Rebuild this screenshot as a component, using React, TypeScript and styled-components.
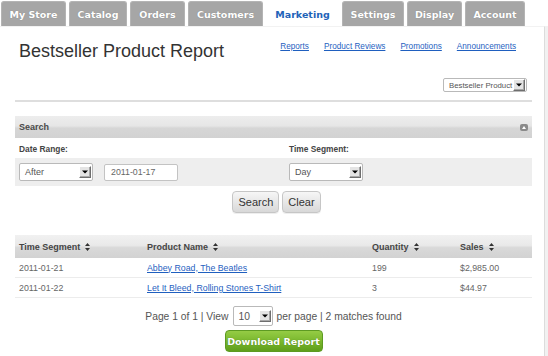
import React from "react";
import styled, { createGlobalStyle } from "styled-components";

const Global = createGlobalStyle`
  html, body { margin: 0; padding: 0; background: #ffffff; }
  body { font-family: "Liberation Sans", Arial, sans-serif; }
  * { box-sizing: border-box; }
`;

const Frame = styled.div`
  width: 548px;
  height: 356px;
  overflow: hidden;
  display: flex;
  flex-direction: column;
`;

const TabBar = styled.div`
  display: flex;
  align-items: flex-end;
  gap: 3px;
  height: 26px;
  padding-left: 1px;
`;

const Tab = styled.div<{ $active?: boolean; $w: number }>`
  width: ${(p) => p.$w}px;
  height: 25px;
  display: flex;
  align-items: center;
  justify-content: center;
  border-radius: 3px 3px 0 0;
  font-family: "DejaVu Sans", Verdana, sans-serif;
  font-weight: bold;
  font-size: 9.5px;
  background: ${(p) => (p.$active ? "#ffffff" : "#a6a6a6")};
  color: ${(p) => (p.$active ? "#1f63b8" : "#ffffff")};
  border: 1px solid ${(p) => (p.$active ? "#ffffff" : "#b4b4b4")};
  border-bottom: none;
  text-shadow: ${(p) => (p.$active ? "none" : "0 0 1px rgba(0,0,0,0.25)")};
`;

const Body = styled.div`
  flex: 1;
  display: flex;
  background: #f1f1f1;
`;

const Main = styled.div`
  width: 545px;
  background: #ffffff;
  border-right: 1px solid #dcdcdc;
  border-top: 1px solid #f2f2f2;
  padding: 0 12px 0 15px;
  display: flex;
  flex-direction: column;
`;

const Header = styled.div`
  display: flex;
  justify-content: space-between;
  padding: 13px 0 0 4px;
`;

const Title = styled.h1`
  margin: 0;
  font-family: "Liberation Sans", Arial, sans-serif;
  font-weight: normal;
  font-size: 18px;
  color: #333333;
  line-height: 22px;
`;

const Links = styled.div`
  display: flex;
  gap: 15px;
  padding: 2px 16px 0 0;
`;

const Link = styled.a`
  font-family: "Liberation Sans", Arial, sans-serif;
  font-size: 8.2px;
  color: #1f5fbf;
  text-decoration: underline;
  cursor: pointer;
`;

const SelectRow = styled.div`
  display: flex;
  justify-content: flex-end;
  padding: 16px 5px 0 0;
`;

const Rule = styled.div`
  height: 2px;
  background: #dedede;
  margin-top: 8px;
`;

const FakeSelect = styled.div<{ $w: number; $h: number; $size: number }>`
  width: ${(p) => p.$w}px;
  height: ${(p) => p.$h}px;
  display: flex;
  align-items: center;
  justify-content: space-between;
  border: 1px solid #b9b9b9;
  border-radius: 2px;
  background: #ffffff;
  padding: 0 1px 0 5px;
  font-family: "Liberation Sans", Arial, sans-serif;
  font-size: ${(p) => p.$size}px;
  color: #555555;
  white-space: nowrap;
  overflow: hidden;
`;

const ArrowBox = styled.span`
  flex: none;
  width: 12px;
  height: 12px;
  display: flex;
  align-items: center;
  justify-content: center;
  background: #e4e4e4;
  border-top: 1px solid #ffffff;
  border-left: 1px solid #ffffff;
  border-right: 1px solid #6e6e6e;
  border-bottom: 1px solid #6e6e6e;
  box-shadow: inset -1px -1px 0 #a8a8a8;
`;

const Arrow = () => (
  <ArrowBox>
    <svg width="6" height="4" viewBox="0 0 6 4">
      <path d="M0 0.5 L6 0.5 L3 3.5 Z" fill="#000" />
    </svg>
  </ArrowBox>
);

const Select = ({ w, h, size, children }: { w: number; h: number; size: number; children: React.ReactNode }) => (
  <FakeSelect $w={w} $h={h} $size={size}>
    <span>{children}</span>
    <Arrow />
  </FakeSelect>
);

const Panel = styled.div`
  margin-top: 14px;
`;

const PanelHead = styled.div`
  height: 22px;
  display: flex;
  align-items: center;
  justify-content: space-between;
  padding: 0 4px 0 4px;
  background: linear-gradient(#ededed 0%, #e6e6e6 45%, #d6d6d6 55%, #d2d2d2 100%);
  font-size: 9px;
  font-weight: bold;
  color: #4a4a4a;
`;

const Collapse = styled.span`
  width: 8px;
  height: 7px;
  border-radius: 2px;
  background: #8a8a8a;
  display: flex;
  align-items: center;
  justify-content: center;
`;

const FormGrid = styled.div`
  display: grid;
  grid-template-columns: 270px 1fr;
  grid-template-rows: 20px 28px;
`;

const Label = styled.div`
  display: flex;
  align-items: center;
  padding: 2px 0 0 4px;
  font-size: 8.4px;
  font-weight: bold;
  color: #444444;
  background: #ffffff;
`;

const Controls = styled.div`
  display: flex;
  align-items: center;
  gap: 11px;
  padding-left: 4px;
  background: #eeeeee;
`;

const TextInput = styled.div`
  width: 74px;
  height: 17px;
  display: flex;
  align-items: center;
  padding-left: 6px;
  border: 1px solid #c3c3c3;
  border-radius: 2px;
  background: #ffffff;
  font-size: 8.8px;
  color: #666666;
`;

const ButtonRow = styled.div`
  display: flex;
  justify-content: center;
  gap: 3px;
  margin-top: 5px;
  padding-left: 6px;
`;

const Button = styled.button`
  height: 22px;
  padding: 0 5px;
  border: 1px solid #c6c6c6;
  border-radius: 4px;
  background: linear-gradient(#f6f6f6, #d8d8d8);
  font-family: "Liberation Sans", Arial, sans-serif;
  font-size: 11px;
  color: #333333;
  box-shadow: 0 1px 0 #eeeeee;
`;

const Table = styled.div`
  margin-top: 22px;
  display: grid;
  grid-template-columns: 128px 225px 88px 1fr;
`;

const Th = styled.div`
  height: 23px;
  display: flex;
  align-items: center;
  gap: 5px;
  padding-left: 4px;
  background: linear-gradient(#f1f1f1 0%, #e9e9e9 45%, #d9d9d9 55%, #d2d2d2 100%);
  font-size: 9px;
  font-weight: bold;
  color: #454545;
`;

const Td = styled.div`
  height: 20px;
  display: flex;
  align-items: center;
  padding-left: 4px;
  border-bottom: 1px solid #ececec;
  font-size: 8.8px;
  color: #666666;
`;

const CellLink = styled.a`
  color: #1f5fbf;
  text-decoration: underline;
`;

const SortIcon = () => (
  <svg width="5" height="8" viewBox="0 0 5 8">
    <path d="M2.5 0 L5 3 L0 3 Z M0 5 L5 5 L2.5 8 Z" fill="#333" />
  </svg>
);

const Pager = styled.div`
  display: flex;
  justify-content: center;
  align-items: center;
  gap: 4px;
  margin-top: 8px;
  font-size: 10.3px;
  color: #555555;
`;

const Footer = styled.div`
  display: flex;
  justify-content: center;
  margin-top: 4px;
`;

const Download = styled.button`
  width: 98px;
  height: 22px;
  border: 1px solid #5d9a22;
  border-radius: 4px;
  background: linear-gradient(#95cc45 0%, #7ab82e 50%, #5f9e1b 100%);
  font-family: "DejaVu Sans", Verdana, sans-serif;
  font-weight: bold;
  font-size: 9.5px;
  color: #ffffff;
  text-shadow: 0 0 1px rgba(0, 0, 0, 0.35);
  padding: 0;
`;

const tabs: [string, number][] = [
  ["My Store", 65],
  ["Catalog", 58],
  ["Orders", 55],
  ["Customers", 75],
  ["Marketing", 73],
  ["Settings", 62],
  ["Display", 55],
  ["Account", 60],
];

const rows = [
  ["2011-01-21", "Abbey Road, The Beatles", "199", "$2,985.00"],
  ["2011-01-22", "Let It Bleed, Rolling Stones T-Shirt", "3", "$44.97"],
];

export default function App() {
  return (
    <Frame>
      <Global />
      <TabBar>
        {tabs.map(([t, w]) => (
          <Tab key={t} $w={w} $active={t === "Marketing"}>
            {t}
          </Tab>
        ))}
      </TabBar>
      <Body>
        <Main>
          <Header>
            <Title>Bestseller Product Report</Title>
            <Links>
              <Link>Reports</Link>
              <Link>Product Reviews</Link>
              <Link>Promotions</Link>
              <Link>Announcements</Link>
            </Links>
          </Header>
          <SelectRow>
            <Select w={84} h={14} size={7.8}>
              Bestseller Product
            </Select>
          </SelectRow>
          <Rule />
          <Panel>
            <PanelHead>
              <span>Search</span>
              <Collapse>
                <svg width="4" height="3" viewBox="0 0 4 3">
                  <path d="M0 3 L2 0 L4 3 Z" fill="#fff" />
                </svg>
              </Collapse>
            </PanelHead>
            <FormGrid>
              <Label>Date Range:</Label>
              <Label>Time Segment:</Label>
              <Controls>
                <Select w={74} h={18} size={9}>
                  After
                </Select>
                <TextInput>2011-01-17</TextInput>
              </Controls>
              <Controls>
                <Select w={74} h={18} size={9}>
                  Day
                </Select>
              </Controls>
            </FormGrid>
          </Panel>
          <ButtonRow>
            <Button>Search</Button>
            <Button>Clear</Button>
          </ButtonRow>
          <Table>
            <Th>Time Segment <SortIcon /></Th>
            <Th>Product Name <SortIcon /></Th>
            <Th>Quantity <SortIcon /></Th>
            <Th>Sales <SortIcon /></Th>
            {rows.map((r) => (
              <React.Fragment key={r[0]}>
                <Td>{r[0]}</Td>
                <Td>
                  <CellLink>{r[1]}</CellLink>
                </Td>
                <Td>{r[2]}</Td>
                <Td>{r[3]}</Td>
              </React.Fragment>
            ))}
          </Table>
          <Pager>
            <span>Page 1 of 1 | View</span>
            <Select w={40} h={20} size={10.3}>
              10
            </Select>
            <span>per page | 2 matches found</span>
          </Pager>
          <Footer>
            <Download>Download Report</Download>
          </Footer>
        </Main>
      </Body>
    </Frame>
  );
}
